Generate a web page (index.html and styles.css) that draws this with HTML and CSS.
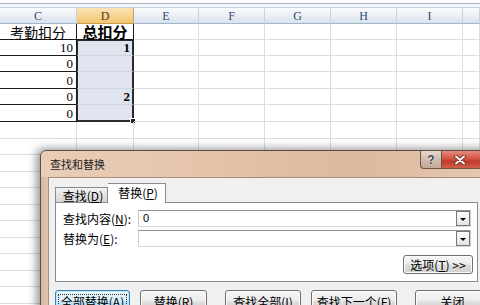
FILE: index.html
```html
<!DOCTYPE html>
<html>
<head>
<meta charset="utf-8">
<link rel="stylesheet" href="styles.css">
</head>
<body>
<div class="screen">
  <div class="topstrip"></div>
  <div class="sheet">
    <div class="hd">C</div><div class="hd hd-sel">D</div><div class="hd">E</div><div class="hd">F</div><div class="hd">G</div><div class="hd">H</div><div class="hd">I</div><div class="hd"></div>

    <div class="c cb cjk">考勤扣分</div><div class="c cb cbr cjk bold">总扣分</div><div class="c"></div><div class="c"></div><div class="c"></div><div class="c"></div><div class="c"></div><div class="c"></div>

    <div class="c cb num">10</div><div class="c sel sel-top num bold">1</div><div class="c"></div><div class="c"></div><div class="c"></div><div class="c"></div><div class="c"></div><div class="c"></div>

    <div class="c cb num">0</div><div class="c sel"></div><div class="c"></div><div class="c"></div><div class="c"></div><div class="c"></div><div class="c"></div><div class="c"></div>

    <div class="c cb num">0</div><div class="c sel"></div><div class="c"></div><div class="c"></div><div class="c"></div><div class="c"></div><div class="c"></div><div class="c"></div>

    <div class="c cb num">0</div><div class="c sel num bold">2</div><div class="c"></div><div class="c"></div><div class="c"></div><div class="c"></div><div class="c"></div><div class="c"></div>

    <div class="c cb num">0</div><div class="c sel sel-bot"><span class="handle"></span></div><div class="c"></div><div class="c"></div><div class="c"></div><div class="c"></div><div class="c"></div><div class="c"></div>

    <div class="c"></div><div class="c"></div><div class="c"></div><div class="c"></div><div class="c"></div><div class="c"></div><div class="c"></div><div class="c"></div>
    <div class="c"></div><div class="c"></div><div class="c"></div><div class="c"></div><div class="c"></div><div class="c"></div><div class="c"></div><div class="c"></div>
    <div class="c"></div><div class="c"></div><div class="c"></div><div class="c"></div><div class="c"></div><div class="c"></div><div class="c"></div><div class="c"></div>
    <div class="c"></div><div class="c"></div><div class="c"></div><div class="c"></div><div class="c"></div><div class="c"></div><div class="c"></div><div class="c"></div>
    <div class="c"></div><div class="c"></div><div class="c"></div><div class="c"></div><div class="c"></div><div class="c"></div><div class="c"></div><div class="c"></div>
    <div class="c"></div><div class="c"></div><div class="c"></div><div class="c"></div><div class="c"></div><div class="c"></div><div class="c"></div><div class="c"></div>
    <div class="c"></div><div class="c"></div><div class="c"></div><div class="c"></div><div class="c"></div><div class="c"></div><div class="c"></div><div class="c"></div>
    <div class="c"></div><div class="c"></div><div class="c"></div><div class="c"></div><div class="c"></div><div class="c"></div><div class="c"></div><div class="c"></div>
    <div class="c"></div><div class="c"></div><div class="c"></div><div class="c"></div><div class="c"></div><div class="c"></div><div class="c"></div><div class="c"></div>
    <div class="c"></div><div class="c"></div><div class="c"></div><div class="c"></div><div class="c"></div><div class="c"></div><div class="c"></div><div class="c"></div>
    <div class="c"></div><div class="c"></div><div class="c"></div><div class="c"></div><div class="c"></div><div class="c"></div><div class="c"></div><div class="c"></div>
  </div>

  <div class="dlg">
    <div class="titlebar">
      <span class="title">查找和替换</span>
      <div class="caps">
        <span class="cap help">?</span>
        <span class="cap close"><svg width="12" height="10" viewBox="0 0 12 10"><path d="M2 1.5 L10 8.5 M10 1.5 L2 8.5" stroke="#5a1a14" stroke-width="3.4" stroke-linecap="round"/><path d="M2 1.5 L10 8.5 M10 1.5 L2 8.5" stroke="#fff" stroke-width="2" stroke-linecap="round"/></svg></span>
      </div>
    </div>
    <div class="client">
      <div class="tabs">
        <span class="tab">查找(<u>D</u>)</span>
        <span class="tab active">替换(<u>P</u>)</span>
      </div>
      <div class="panel">
        <div class="field">
          <span class="label">查找内容(<u>N</u>):</span>
          <div class="combo"><span class="val">0</span><span class="drop"><i></i></span></div>
        </div>
        <div class="field">
          <span class="label">替换为(<u>E</u>):</span>
          <div class="combo"><span class="val"></span><span class="drop"><i></i></span></div>
        </div>
        <div class="optrow">
          <span class="btn opt">选项(<u>T</u>) &gt;&gt;</span>
        </div>
      </div>
      <div class="btns">
        <span class="btn b1 focus"><span class="dots">全部替换(<u>A</u>)</span></span>
        <span class="btn b2">替换(<u>R</u>)</span>
        <span class="btn b3">查找全部(<u>I</u>)</span>
        <span class="btn b4">查找下一个(<u>F</u>)</span>
        <span class="btn b5">关闭</span>
      </div>
    </div>
  </div>
</div>
</body>
</html>
```

FILE: styles.css
```css
* { box-sizing: border-box; }
body {
  margin: 0;
  font-family: "Noto Sans CJK SC", "Liberation Sans", sans-serif;
  background: #fff;
}
.screen {
  position: relative;
  width: 480px;
  height: 305px;
  overflow: hidden;
  background: #fff;
}
.topstrip {
  height: 7px;
  border-top: 3px solid #fff;
  background: linear-gradient(#a7b8cf 0 1px, #f3f6f9 1px);
}
.sheet {
  display: grid;
  grid-template-columns: 77px 57px 65px 66px 66px 66px 66px 1fr;
  grid-template-rows: 17px 16px 16px 16px 17px 16px 17px 17px 16px 17px 16px 17px 16px 17px 16px 17px 16px 17px;
}
.hd {
  border-top: 1px solid #c3d0de;
  border-right: 1px solid #c5d2e0;
  border-bottom: 1px solid #9eb6ce;
  background: linear-gradient(#f9fbfd, #e9eef5 55%, #dae2ec);
  color: #2f4a68;
  font-family: "Liberation Serif", serif;
  font-size: 12px;
  display: flex;
  align-items: center;
  justify-content: center;
  line-height: 1;
}
.hd-sel {
  background: linear-gradient(#fbe3b4, #f7d28e 55%, #f3c56e);
  border-right-color: #c7a35c;
  border-bottom-color: #c49a4c;
  color: #4a3a20;
}
.c {
  border-right: 1px solid #dadde6;
  border-bottom: 1px solid #dadde6;
  display: flex;
  align-items: flex-end;
  justify-content: flex-end;
  padding: 0 3px 0 2px;
  font-size: 13px;
  line-height: 15px;
  color: #000;
  position: relative;
  overflow: visible;
}
.cb { border-bottom-color: #1a1a1a; border-right-color: #1a1a1a; }
.cbr { border-right-color: #1a1a1a; border-bottom-color: #1a1a1a; }
.cjk {
  justify-content: center;
  align-items: center;
  font-size: 14px;
  line-height: 14px;
  padding: 0;
  white-space: nowrap;
}
.cjk.bold { font-size: 15px; }
.num { font-family: "Liberation Serif", serif; }
.bold { font-weight: bold; }
.sel {
  background: #dfe4ef;
  border-left: 1px solid #2b2b2b;
  border-right: 2px solid #2b2b2b;
  border-bottom: 1px solid #cdd3e0;
  padding-right: 2px;
}
.sel-top { border-top: 1px solid #2b2b2b; }
.sel-bot { border-bottom: 2px solid #2b2b2b; }
.handle {
  position: absolute;
  right: -4px;
  bottom: -4px;
  width: 6px;
  height: 6px;
  background: #222;
  border: 1px solid #fff;
}

/* dialog */
.dlg {
  position: absolute;
  left: 40px;
  top: 150px;
  width: 452px;
  height: 170px;
  background: linear-gradient(90deg, #d8b89f, #e2c6b0 8px, #e2c6b0);
  border: 1px solid #5e4d40;
  border-radius: 6px 6px 0 0;
  box-shadow: -3px -1px 10px rgba(0, 0, 0, 0.45);
  font-size: 12px;
  color: #000;
  display: flex;
  flex-direction: column;
}
.titlebar {
  height: 26px;
  display: flex;
  align-items: flex-start;
  background: linear-gradient(90deg, #e9cdb7 0%, #e4c4ab 35%, #dcb89e 70%, #e6c7b0 100%);
  border-radius: 6px 6px 0 0;
  padding-left: 9px;
}
.title {
  font-size: 11px;
  line-height: 14px;
  margin-top: 6px;
  color: #222;
  white-space: nowrap;
}
.caps {
  margin-left: auto;
  margin-right: 5px;
  display: flex;
}
.cap {
  height: 18px;
  display: flex;
  align-items: center;
  justify-content: center;
  border: 1px solid #6b5547;
  border-top: none;
}
.help {
  width: 22px;
  border-radius: 0 0 0 4px;
  background: linear-gradient(#e6d6ca, #d2bcad 50%, #c3a898);
  color: #3f4a5e;
  font-family: "Liberation Sans", sans-serif;
  font-weight: bold;
  font-size: 12px;
  text-shadow: 0 0 2px #fff;
}
.close {
  width: 44px;
  border-left: none;
  border-radius: 0 0 4px 0;
  background: linear-gradient(#e68b7c, #d45442 45%, #c03a28 60%, #d0604c);
  justify-content: flex-start;
  padding-left: 12px;
}
.client {
  flex: 1;
  margin-left: 7px;
  background: #f0f0f0;
  border-top: 1px solid #a78f7c;
  border-left: 1px solid #a78f7c;
  padding: 5px 0 0 6px;
}
.tabs {
  display: flex;
  align-items: flex-end;
  height: 19px;
  position: relative;
  z-index: 1;
}
.tab {
  width: 53px;
  height: 15px;
  border: 1px solid #898c95;
  border-bottom: none;
  background: linear-gradient(#f2f2f2, #e3e3e3 50%, #d6d6d6);
  display: flex;
  align-items: center;
  justify-content: center;
  font-size: 12px;
  line-height: 13px;
  padding-left: 3px;
}
.tab.active {
  width: 58px;
  height: 20px;
  margin-bottom: -1px;
  background: #fff;
  border-left: none;
  padding-bottom: 2px;
}
.panel {
  width: 423px;
  background: #fff;
  border: 1px solid #898c95;
  padding: 7px 6px 7px 7px;
  display: flex;
  flex-direction: column;
  gap: 3px;
}
.field {
  display: flex;
  align-items: center;
  height: 17px;
}
.label {
  width: 75px;
  flex: none;
  font-size: 12px;
  line-height: 14px;
  white-space: nowrap;
}
.combo {
  flex: 1;
  height: 17px;
  border: 1px solid #a4a8b0;
  border-color: #8e929a #c9ccd3 #d5d8de #c9ccd3;
  display: flex;
  align-items: center;
  padding-left: 4px;
}
.val {
  flex: 1;
  font-family: "Liberation Sans", sans-serif;
  font-size: 11px;
  line-height: 13px;
}
.drop {
  width: 14px;
  height: 15px;
  border: 1px solid #777;
  background: linear-gradient(#fdfdfd, #e4e4e4);
  display: flex;
  align-items: center;
  justify-content: center;
}
.drop i {
  width: 0;
  height: 0;
  border-left: 3px solid transparent;
  border-right: 3px solid transparent;
  border-top: 3px solid #000;
  margin-top: 1px;
}
.optrow {
  display: flex;
  justify-content: flex-end;
  margin-top: 5px;
  margin-right: -2px;
}
.btn {
  height: 19px;
  border: 1px solid #707070;
  border-radius: 3px;
  background: linear-gradient(#f5f5f5, #ececec 48%, #dddddd 52%, #d0d0d0);
  display: flex;
  align-items: center;
  justify-content: center;
  font-size: 12px;
  line-height: 14px;
  white-space: nowrap;
  box-shadow: inset 0 0 0 1px #fcfcfc;
}
.opt { width: 70px; }
.btns {
  display: flex;
  margin-top: 8px;
}
.btns .btn { height: 23px; }
.b1 { width: 75px; }
.b2 { width: 67px; margin-left: 10px; }
.b3 { width: 76px; margin-left: 18px; }
.b4 { width: 86px; margin-left: 10px; }
.b5 { width: 75px; margin-left: 18px; }
.focus {
  border-color: #3c7fb1;
  box-shadow: inset 0 0 0 1px #bfe6f7;
  background: linear-gradient(#eaf6fd, #d9f0fc 48%, #bee6fd 52%, #a7d9f5);
}
.dots {
  border: 1px dotted #333;
  padding: 0 2px;
  line-height: 14px;
}
u { text-decoration: underline; text-underline-offset: 1px; }
```
